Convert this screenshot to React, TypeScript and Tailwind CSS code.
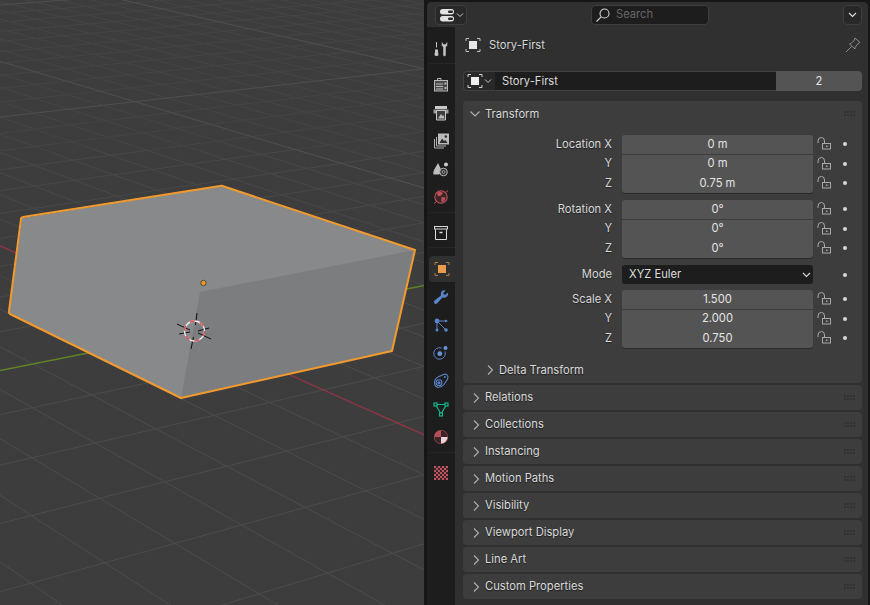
import React from "react";

type P = [number, number];
// projective map of the floor grid, measured from four grid crossings in the picture
function makeMap(p0: P, p1: P, p2: P, p3: P, w: number, h: number) {
  const [x0, y0] = p0, [x1, y1] = p1, [x2, y2] = p2, [x3, y3] = p3;
  const dx1 = x1 - x2, dx2 = x3 - x2, sx = x0 - x1 + x2 - x3;
  const dy1 = y1 - y2, dy2 = y3 - y2, sy = y0 - y1 + y2 - y3;
  const den = dx1 * dy2 - dx2 * dy1;
  const g = (sx * dy2 - dx2 * sy) / den;
  const hh = (dx1 * sy - sx * dy1) / den;
  const a = x1 - x0 + g * x1, b = x3 - x0 + hh * x3, c = x0;
  const d = y1 - y0 + g * y1, e = y3 - y0 + hh * y3, f = y0;
  return (i: number, j: number): [number, number, number] => {
    const u = i / w, v = j / h;
    const W = g * u + hh * v + 1;
    return [(a * u + b * v + c) / W, (d * u + e * v + f) / W, W];
  };
}
const map = makeMap([32.3, 407.7], [148.3, 382.7], [366, 490.7], [241.7, 525], 2, 3);

const RED_I = 4;
const GREEN_J = -1;

function Grid() {
  const N = 70;
  const minor = ["", "", ""];
  const major = ["", "", ""];
  const seg = (fn: (t: number) => [number, number, number], isMajor: boolean) => {
    for (let t = -N; t < N; t += 0.5) {
      const p = fn(t);
      const q = fn(t + 0.5);
      if (p[2] <= 0.03 || q[2] <= 0.03) continue;
      const y = (p[1] + q[1]) / 2;
      const b = y < 150 ? 0 : y < 300 ? 1 : 2;
      const s = `M${p[0].toFixed(1)} ${p[1].toFixed(1)}L${q[0].toFixed(1)} ${q[1].toFixed(1)}`;
      if (isMajor) major[b] += s;
      else minor[b] += s;
    }
  };
  for (let k = -N; k <= N; k++) {
    if (k !== RED_I) seg((t) => map(k, t), (k - RED_I) % 10 === 0);
    if (k !== GREEN_J) seg((t) => map(t, k), (k - GREEN_J) % 10 === 0);
  }
  const axis = (fn: (t: number) => [number, number, number]) => {
    let d = "";
    let pen = false;
    for (let t = -N; t <= N; t += 0.5) {
      const p = fn(t);
      if (p[2] > 0.03) {
        d += `${pen ? "L" : "M"}${p[0].toFixed(1)} ${p[1].toFixed(1)}`;
        pen = true;
      } else pen = false;
    }
    return d;
  };
  const mc = ["#454545", "#484848", "#4c4c4c"];
  const Mc = ["#4f4f4f", "#525252", "#555555"];
  return (
    <>
      {minor.map((d, i) => <path key={"m" + i} d={d} fill="none" stroke={mc[i]} strokeWidth="1" />)}
      {major.map((d, i) => <path key={"M" + i} d={d} fill="none" stroke={Mc[i]} strokeWidth="1" />)}
      <path d={axis((t) => map(RED_I, t))} fill="none" stroke="#8a3644" strokeWidth="1.500" />
      <path d={axis((t) => map(t, GREEN_J))} fill="none" stroke="#5f8228" strokeWidth="1.500" />
    </>
  );
}

function Viewport() {
  return (
    <div className="relative h-full w-[424px] shrink-0 overflow-hidden bg-[#3d3d3d]">
      <svg width="424" height="605" viewBox="0 0 424 605" className="block">
        <Grid />
        <polygon points="22,218 222,186 415,250 392,351 181,398 9,313" fill="#88898a" />
        <polygon points="200,292 415,250 392,351 181,398" fill="#7c7d7f" />
        <path d="M23,217 L220,186 Q222,185.500 224,186.500 L415,250 L392,351 L181,398 L10,314 Q8.500,313 9,311 L21,219 Q21,217.500 23,217 Z" fill="none" stroke="#f29a2e" strokeWidth="2" strokeLinejoin="round" />
        <circle cx="203.500" cy="283" r="2.700" fill="#f5961e" stroke="#4a4a44" strokeWidth="1" />
        <g stroke="#111" strokeWidth="1">
          <line x1="197" y1="313" x2="195.500" y2="325" />
          <line x1="191" y1="349" x2="193.500" y2="337" />
          <line x1="177" y1="324" x2="190" y2="330" />
          <line x1="211" y1="339" x2="198" y2="333" />
          <line x1="179" y1="334" x2="190" y2="332" />
          <line x1="209" y1="328" x2="198" y2="331" />
        </g>
        <circle cx="194.500" cy="331" r="10" fill="none" stroke="#eeeeee" strokeWidth="1.300" />
        <circle cx="194.500" cy="331" r="10" fill="none" stroke="#e0484a" strokeWidth="1.300" strokeDasharray="5.200 5.270" />
      </svg>
    </div>
  );
}

function ObjIcon({ size = 16, c = "#e6e6e6", b = "#c0c0c0" }: { size?: number; c?: string; b?: string }) {
  return (
    <svg width={size} height={size} viewBox="0 0 16 16">
      <path d="M1 4V1.500H4M12 1.500H15V4M15 12V14.500H12M4 14.500H1V12" fill="none" stroke={b} strokeWidth="1" />
      <rect x="4" y="4" width="8" height="8" fill={c} />
    </svg>
  );
}

const tabs: Record<string, React.ReactNode> = {
  tool: (
    <svg width="16" height="16" viewBox="0 0 16 16">
      <path d="M3.500 1V6.500" stroke="#c4c4c4" strokeWidth="1" />
      <path d="M2 8.500H5V11L5.500 13.500Q5.500 15 3.500 15T1.500 13.500L2 11Z" fill="#c4c4c4" />
      <path d="M9 1.500V4.500L10.500 6V14Q10.500 15 11.500 15T12.500 14V6L14 4.500V1.500L13 3.500H10Z" fill="#c4c4c4" stroke="#c4c4c4" strokeWidth=".5" />
    </svg>
  ),
  render: (
    <svg width="16" height="16" viewBox="0 0 16 16" fill="none" stroke="#b8b8b8">
      <path d="M4.500 3.500V1.500H8V3.500" />
      <rect x="1.500" y="3.500" width="13" height="10.500" fill="#4a4a4a" />
      <path d="M3 7H10M3 9.500H10M3 12H10" strokeWidth="1" />
      <rect x="11.500" y="5.500" width="2" height="2" fill="#b8b8b8" stroke="none" />
      <rect x="11.500" y="10" width="2" height="2" fill="#b8b8b8" stroke="none" />
    </svg>
  ),
  output: (
    <svg width="16" height="16" viewBox="0 0 16 16">
      <rect x="2" y="1" width="12" height="3" fill="#c8c8c8" />
      <rect x="0.500" y="4.500" width="15" height="4" fill="#9a9a9a" />
      <path d="M3.500 5.500H12.500V15H3.500Z" fill="#3c3c3c" stroke="#c8c8c8" />
      <path d="M5 13.500L8 9L9.500 11L10.500 10L11.500 13.500Z" fill="#b8b8b8" />
    </svg>
  ),
  view: (
    <svg width="16" height="16" viewBox="0 0 16 16" fill="none" stroke="#b0b0b0">
      <path d="M1.500 6V15H11" />
      <path d="M3.500 4V13H13" />
      <rect x="5.500" y="1" width="10" height="10" fill="#bbbbbb" stroke="#bbbbbb" />
      <path d="M6.500 10L9 5.500L11 8L12.500 7L14.500 10Z" fill="#2c2c2c" stroke="none" />
      <circle cx="12.800" cy="3.500" r="1.200" fill="#2c2c2c" stroke="none" />
    </svg>
  ),
  scene: (
    <svg width="16" height="16" viewBox="0 0 16 16">
      <path d="M5 2L9 10.500Q7 13.500 5.500 13.500H1Q-.5 13 1 9Z" fill="#bdbdbd" />
      <circle cx="13" cy="3.500" r="2" fill="#cccccc" />
      <circle cx="10.500" cy="11" r="3.800" fill="#2a2a2a" stroke="#bdbdbd" strokeWidth="1" />
      <circle cx="10.500" cy="11" r="1.500" fill="none" stroke="#bdbdbd" strokeWidth=".8" />
    </svg>
  ),
  world: (
    <svg width="16" height="16" viewBox="0 0 16 16">
      <circle cx="8" cy="8" r="6.200" fill="#3a2628" stroke="#c0525c" strokeWidth="1.100" />
      <path d="M4 4L7 2.500L10 4L8 6.500L5 7.500Z" fill="#c0525c" />
      <path d="M8.500 8L12.500 8.500L11 12.500L8.500 13Z" fill="#c0525c" />
      <path d="M1 14.500L3.500 12.500M15 1.500L12.500 3.500" stroke="#c0525c" strokeWidth="1" />
    </svg>
  ),
  coll: (
    <svg width="16" height="16" viewBox="0 0 16 16" fill="none" stroke="#dcdcdc" strokeWidth="1">
      <rect x="1.500" y="1.500" width="13" height="2.500" />
      <path d="M2.500 4.500V14.500H13.500V4.500" />
      <path d="M6.500 7.500H9.500" strokeWidth="1.500" />
    </svg>
  ),
  obj: <ObjIcon c="#ec9a4e" b="#b07a48" />,
  mod: (
    <svg width="16" height="16" viewBox="0 0 16 16">
      <path d="M15 3.500L12 6L10 4.500L12.500 1.500Q9 .5 8 3.500Q7.500 5 8 6.500L1.500 11.500Q0 13 1.500 14.500Q3 15.500 4.500 14L9.500 8.500Q13 9.500 14.500 7Q15.500 5 15 3.500Z" fill="#5a84c8" />
    </svg>
  ),
  part: (
    <svg width="16" height="16" viewBox="0 0 16 16" stroke="#5a84c8" fill="#5a84c8">
      <path d="M4 4H14M4 4V13M4 4L13 13" strokeWidth="1" />
      <circle cx="4" cy="4" r="2.400" stroke="none" />
      <circle cx="4" cy="13" r="1.500" stroke="none" />
      <circle cx="13" cy="13" r="1.800" stroke="none" />
      <path d="M12 2.500L15 4L12 5.500Z" stroke="none" />
    </svg>
  ),
  phys: (
    <svg width="16" height="16" viewBox="0 0 16 16" fill="none">
      <path d="M12 6.500A5.800 5.800 0 1 1 8.500 3" stroke="#5a84c8" strokeWidth="1" />
      <circle cx="6.800" cy="8.700" r="2.400" fill="#6a94d8" />
      <circle cx="12.500" cy="3" r="2" fill="#6a94d8" />
    </svg>
  ),
  cons: (
    <svg width="16" height="16" viewBox="0 0 16 16" fill="none" stroke="#5a84c8" strokeWidth="1.100">
      <path d="M1.500 9.500Q1.500 5.500 6 3.500L10.500 1.500Q13 .5 14.500 2.500Q15.500 4.500 14 7L11 11.500Q8.500 14.500 5 14.500Q1.500 13.500 1.500 9.500Z" />
      <circle cx="6" cy="9.700" r="2.900" />
      <circle cx="6" cy="9.700" r="1" fill="#5a84c8" />
      <circle cx="11.800" cy="4" r="1" fill="#5a84c8" stroke="none" />
    </svg>
  ),
  data: (
    <svg width="16" height="16" viewBox="0 0 16 16" fill="none" stroke="#12c090" strokeWidth="1.100">
      <path d="M2.500 3.500H13.500L8 13Z" />
      <rect x="1" y="2" width="3" height="3" fill="#1d1d1d" />
      <rect x="12" y="2" width="3" height="3" fill="#1d1d1d" />
      <rect x="6.500" y="12" width="3" height="3" fill="#1d1d1d" />
    </svg>
  ),
  mat: (
    <svg width="16" height="16" viewBox="0 0 16 16">
      <circle cx="8" cy="8" r="7" fill="#b34f58" />
      <path d="M8 8V1.500A6.500 6.500 0 0 1 14.500 8Z" fill="#3a2427" />
      <path d="M8 8H1.500A6.500 6.500 0 0 0 8 14.500Z" fill="#3a2427" />
      <path d="M8 8H14.500A6.500 6.500 0 0 1 8 14.500Z" fill="#e6d6d6" />
    </svg>
  ),
  tex: (
    <svg width="16" height="16" viewBox="0 0 16 16">
      <rect x="1" y="1" width="14" height="14" fill="#c0545e" />
      {[0, 1, 2, 3, 4, 5, 6].flatMap((r) =>
        [0, 1, 2, 3, 4, 5, 6].map((q) =>
          (r + q) % 2 === 1 ? <rect key={r + "-" + q} x={1 + q * 2} y={1 + r * 2} width="2" height="2" fill="#3a2427" /> : null
        )
      )}
    </svg>
  ),
};

function Tab({ id, h = 28, active = false, mt = 0 }: { id: string; h?: number; active?: boolean; mt?: number }) {
  return (
    <div
      className={
        active
          ? "flex items-center justify-center rounded-l-[4px] bg-[#303030]"
          : "flex items-center justify-center"
      }
      style={{ height: h, marginTop: mt }}
    >
      {tabs[id]}
    </div>
  );
}

function Sep() {
  return <div className="h-px w-full bg-[#272727]" />;
}

function TabColumn() {
  return (
    <div className="flex w-[28px] shrink-0 flex-col bg-[#1d1d1d] pl-[2px]">
      <div className="flex h-[36px] items-center justify-center pt-[7px] pr-[2px]">{tabs.tool}</div>
      <Sep />
      <div className="pr-[2px]">
        <Tab id="render" mt={7} />
        <Tab id="output" />
        <Tab id="view" />
        <Tab id="scene" />
        <Tab id="world" />
      </div>
      <div className="mt-[1px]"><Sep /></div>
      <div className="pr-[2px]"><Tab id="coll" mt={6} /></div>
      <div className="mb-[8px]"><Sep /></div>
      <Tab id="obj" h={26} active />
      <div className="pr-[2px]">
        <Tab id="mod" mt={1} />
        <Tab id="part" />
        <Tab id="phys" />
        <Tab id="cons" />
        <Tab id="data" />
        <Tab id="mat" />
      </div>
      <div className="mt-[1px]"><Sep /></div>
      <div className="pr-[2px]"><Tab id="tex" mt={6} /></div>
    </div>
  );
}

function Chev({ open = false, c = "#b0b0b0" }: { open?: boolean; c?: string }) {
  return open ? (
    <svg width="12" height="12" viewBox="0 0 12 12" fill="none" stroke={c} strokeWidth="1.100">
      <path d="M1.500 3.500L6 8L10.500 3.500" />
    </svg>
  ) : (
    <svg width="12" height="12" viewBox="0 0 12 12" fill="none" stroke={c} strokeWidth="1.100">
      <path d="M5 1.500L9.500 6L5 10.500" />
    </svg>
  );
}

function Grip() {
  return (
    <svg width="12" height="6" viewBox="0 0 12 6" className="shrink-0">
      {[0, 1, 2, 3].flatMap((x) =>
        [0, 1].map((y) => <rect key={x + "-" + y} x={x * 3 + 0.5} y={y * 3 + 0.5} width="1" height="1" fill="#161616" />)
      )}
    </svg>
  );
}

function Lock() {
  return (
    <svg width="15" height="13" viewBox="0 0 15 13" fill="none" stroke="#a8a8a8" strokeWidth="1">
      <path d="M1 6V4Q1 .5 4.500 .5Q7.500 .5 7.500 4V6.500" />
      <rect x="5.500" y="6.500" width="8" height="5.500" />
      <rect x="9" y="8.500" width="1.500" height="1.500" fill="#a8a8a8" stroke="none" />
    </svg>
  );
}

function Dot() {
  return <div className="h-[4px] w-[4px] rounded-full bg-[#d8d8d8]" />;
}

function FieldRow({ label, value, first, last }: { label: string; value: string; first?: boolean; last?: boolean }) {
  const r = first ? "rounded-t-[3px]" : last ? "rounded-b-[3px] shadow-[0_1px_0_#2a2a2a]" : "";
  return (
    <div className="flex h-[19px] items-center">
      <div className="w-[159px] pr-[10px] text-right text-[#d8d8d8] [text-shadow:0_1px_1px_#0007]">{label}</div>
      <div className={"flex h-full w-[191px] items-center justify-center bg-[#545454] text-[#e4e4e4] " + r}>{value}</div>
      <div className="mb-[2px] ml-[4px] flex w-[15px] items-center"><Lock /></div>
      <div className="mb-[1px] ml-[11px] flex w-[4px] items-center"><Dot /></div>
    </div>
  );
}

function Group({ rows, mt }: { rows: [string, string][]; mt: number }) {
  return (
    <div className="flex flex-col gap-[0.5px]" style={{ marginTop: mt }}>
      {rows.map(([l, v], i) => (
        <FieldRow key={i} label={l} value={v} first={i === 0} last={i === rows.length - 1} />
      ))}
    </div>
  );
}

function Collapsed({ name }: { name: string }) {
  return (
    <div className="flex h-[25px] items-center rounded-[4px] bg-[#3d3d3d] pl-[6px] pr-[6px]">
      <Chev />
      <span className="ml-[4px] flex-1 text-[#dadada] [text-shadow:0_1px_1px_#0008]">{name}</span>
      <Grip />
    </div>
  );
}

function Properties() {
  return (
    <div className="ml-[3px] mt-[2px] flex h-[603px] w-[441px] shrink-0 flex-col overflow-hidden rounded-t-[5px] bg-[#303030] text-[11.2px] leading-none">
      {/* header */}
      <div className="flex h-[25px] shrink-0 items-center bg-[#303030] pl-[8px] pr-[6px]">
        <div className="flex h-[20px] w-[32px] items-center justify-center gap-[1px] rounded-[4px] border border-[#3e3e3e] bg-[#282828]">
          <svg width="16" height="16" viewBox="0 0 16 16">
            <rect x="1" y="2" width="14" height="5.500" rx="2.700" fill="#e4e4e4" />
            <rect x="1" y="9" width="14" height="5.500" rx="2.700" fill="#e4e4e4" />
            <rect x="9" y="3.500" width="5" height="2.500" rx="1.200" fill="#282828" />
            <rect x="9" y="10.500" width="5" height="2.500" rx="1.200" fill="#282828" />
          </svg>
          <svg width="8" height="8" viewBox="0 0 8 8" fill="none" stroke="#c8c8c8" strokeWidth="1"><path d="M1 2.500L4 5.500L7 2.500" /></svg>
        </div>
        <div className="ml-[124px] flex h-[20px] w-[118px] items-center rounded-[4px] border border-[#3e3e3e] bg-[#1d1d1d] pl-[3px]">
          <svg width="16" height="16" viewBox="0 0 16 16" fill="none" stroke="#d0d0d0" strokeWidth="1.100">
            <circle cx="9.500" cy="6.500" r="4.500" />
            <path d="M6 10L1.500 14.500" />
          </svg>
          <span className="ml-[5px] text-[#666666]">Search</span>
        </div>
        <div className="ml-auto flex h-[20px] w-[19px] items-center justify-center rounded-[4px] border border-[#3e3e3e] bg-[#282828]">
          <svg width="9" height="8" viewBox="0 0 9 8" fill="none" stroke="#e0e0e0" strokeWidth="1.100"><path d="M1 2L4.500 5.500L8 2" /></svg>
        </div>
      </div>
      <div className="flex min-h-0 flex-1">
        <TabColumn />
        <div className="flex min-w-0 flex-1 flex-col pl-[8px] pr-[6px]">
          {/* breadcrumb */}
          <div className="flex h-[36px] shrink-0 items-center pl-[2px]">
            <ObjIcon size={16} />
            <span className="ml-[8px] pt-[2px] text-[#d8d8d8] [text-shadow:0_1px_1px_#0007]">Story-First</span>
            <svg className="ml-auto mr-[1px]" width="16" height="16" viewBox="0 0 16 16" fill="none" stroke="#8c8c8c" strokeWidth="1">
              <path d="M10 1L15 5.500L13 6.500L10 10.500L10 12L4.500 7L6 6.500L9.500 3Z" />
              <path d="M6.500 9.500L1 15" />
            </svg>
          </div>
          {/* name row */}
          <div className="mt-[8px] flex h-[20px] shrink-0">
            <div className="flex w-[32px] items-center justify-center gap-[1px] rounded-l-[4px] border border-r-0 border-[#414141] bg-[#282828]">
              <ObjIcon size={16} c="#eeeeee" b="#d0d0d0" />
              <svg width="8" height="8" viewBox="0 0 8 8" fill="none" stroke="#c8c8c8" strokeWidth="1"><path d="M1 2.500L4 5.500L7 2.500" /></svg>
            </div>
            <div className="flex flex-1 items-center border border-x-0 border-[#414141] bg-[#1d1d1d] pl-[7px] pt-[1px] text-[#dcdcdc]">Story-First</div>
            <div className="flex w-[86px] items-center justify-center rounded-r-[4px] bg-[#545454] pt-[1px] text-[#e4e4e4]">2</div>
          </div>
          {/* transform */}
          <div className="mt-[10px] flex h-[282px] shrink-0 flex-col rounded-[4px] bg-[#3d3d3d]">
            <div className="flex h-[26px] shrink-0 items-center pl-[6px] pr-[6px]">
              <Chev open />
              <span className="ml-[4px] flex-1 pt-[1px] text-[#dadada] [text-shadow:0_1px_1px_#0008]">Transform</span>
              <Grip />
            </div>
            <div className="mt-[8px] flex flex-col">
              <Group mt={0} rows={[["Location X", "0 m"], ["Y", "0 m"], ["Z", "0.75 m"]]} />
              <Group mt={7} rows={[["Rotation X", "0°"], ["Y", "0°"], ["Z", "0°"]]} />
              <div className="mt-[7px] flex h-[19px] items-center">
                <div className="w-[159px] pr-[10px] text-right text-[#d8d8d8] [text-shadow:0_1px_1px_#0007]">Mode</div>
                <div className="flex h-full w-[191px] items-center justify-between rounded-[3px] bg-[#1d1d1d] pl-[7px] pr-[2px] text-[#dcdcdc]">
                  XYZ Euler
                  <svg width="9" height="8" viewBox="0 0 9 8" fill="none" stroke="#d8d8d8" strokeWidth="1.100"><path d="M1 2L4.500 5.500L8 2" /></svg>
                </div>
                <div className="ml-[30px] flex w-[4px] items-center"><Dot /></div>
              </div>
              <Group mt={6} rows={[["Scale X", "1.500"], ["Y", "2.000"], ["Z", "0.750"]]} />
            </div>
            <div className="mt-[12px] flex h-[20px] items-center pl-[20px]">
              <Chev />
              <span className="ml-[4px] pt-[1px] text-[#dadada] [text-shadow:0_1px_1px_#0008]">Delta Transform</span>
            </div>
          </div>
          <div className="mt-[2px] flex flex-col gap-[2px]">
            {["Relations", "Collections", "Instancing", "Motion Paths", "Visibility", "Viewport Display", "Line Art", "Custom Properties"].map((n) => (
              <Collapsed key={n} name={n} />
            ))}
          </div>
        </div>
      </div>
    </div>
  );
}

export default function App() {
  return (
    <div className="flex h-[605px] w-[870px] overflow-hidden bg-[#161616] font-['Inter','Liberation_Sans',sans-serif]">
      <Viewport />
      <Properties />
    </div>
  );
}
